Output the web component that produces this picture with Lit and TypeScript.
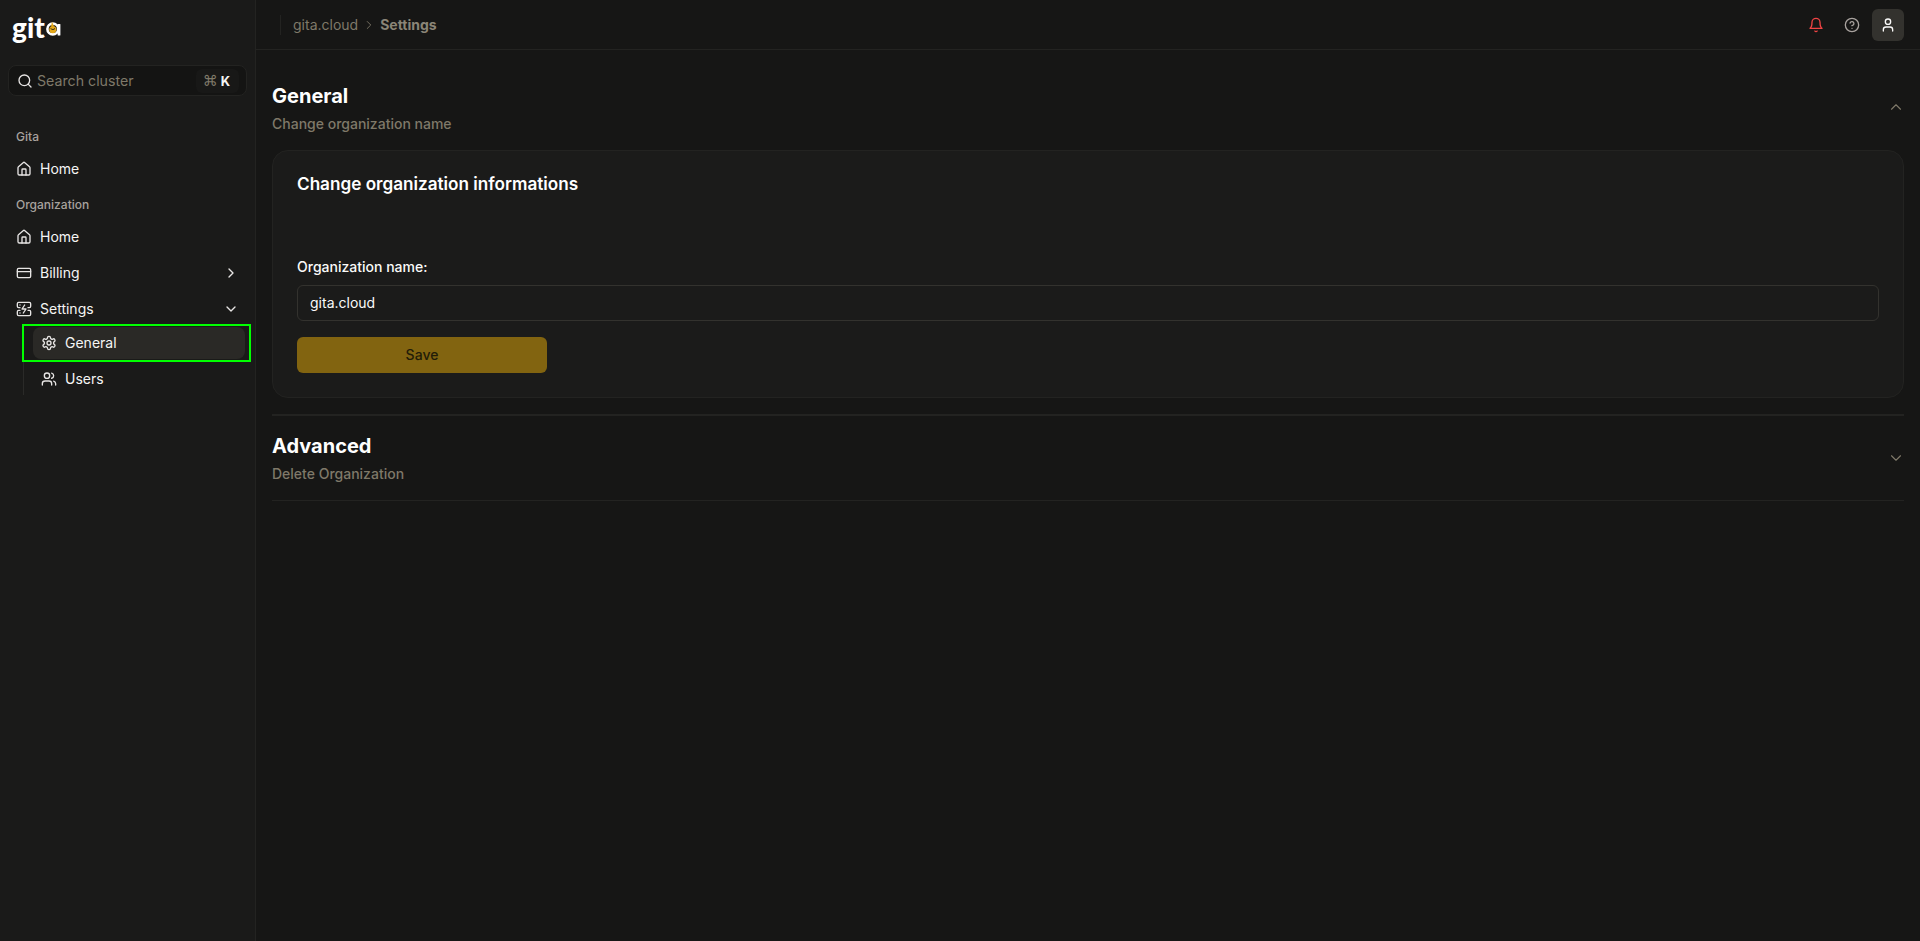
import { LitElement, html, css, svg } from "lit";
import { customElement } from "lit/decorators.js";

const icon = (body: unknown, size = 16, cls = "") => html`<svg class=${cls} width=${size} height=${size} viewBox="0 0 24 24" fill="none" stroke="currentColor" stroke-width="2" stroke-linecap="round" stroke-linejoin="round">${body}</svg>`;

const I = {
  search: svg`<circle cx="11" cy="11" r="8"/><path d="m21 21-4.3-4.3"/>`,
  house: svg`<path d="M15 21v-8a1 1 0 0 0-1-1h-4a1 1 0 0 0-1 1v8"/><path d="M3 10a2 2 0 0 1 .709-1.528l7-5.999a2 2 0 0 1 2.582 0l7 5.999A2 2 0 0 1 21 10v9a2 2 0 0 1-2 2H5a2 2 0 0 1-2-2z"/>`,
  card: svg`<rect width="20" height="14" x="2" y="5" rx="2"/><line x1="2" x2="22" y1="10" y2="10"/>`,
  server: svg`<path d="M6 10H4a2 2 0 0 1-2-2V4a2 2 0 0 1 2-2h16a2 2 0 0 1 2 2v4a2 2 0 0 1-2 2h-2"/><path d="M6 14H4a2 2 0 0 0-2 2v4a2 2 0 0 0 2 2h16a2 2 0 0 0 2-2v-4a2 2 0 0 0-2-2h-2"/><path d="M6 6h.01"/><path d="M6 18h.01"/><path d="m13 6-4 6h6l-4 6"/>`,
  gear: svg`<path d="M12.22 2h-.44a2 2 0 0 0-2 2v.18a2 2 0 0 1-1 1.73l-.43.25a2 2 0 0 1-2 0l-.15-.08a2 2 0 0 0-2.73.73l-.22.38a2 2 0 0 0 .73 2.73l.15.1a2 2 0 0 1 1 1.72v.51a2 2 0 0 1-1 1.74l-.15.09a2 2 0 0 0-.73 2.73l.22.38a2 2 0 0 0 2.73.73l.15-.08a2 2 0 0 1 2 0l.43.25a2 2 0 0 1 1 1.73V20a2 2 0 0 0 2 2h.44a2 2 0 0 0 2-2v-.18a2 2 0 0 1 1-1.73l.43-.25a2 2 0 0 1 2 0l.15.08a2 2 0 0 0 2.73-.73l.22-.39a2 2 0 0 0-.73-2.73l-.15-.08a2 2 0 0 1-1-1.74v-.5a2 2 0 0 1 1-1.74l.15-.09a2 2 0 0 0 .73-2.73l-.22-.38a2 2 0 0 0-2.73-.73l-.15.08a2 2 0 0 1-2 0l-.43-.25a2 2 0 0 1-1-1.73V4a2 2 0 0 0-2-2z"/><circle cx="12" cy="12" r="3"/>`,
  users: svg`<path d="M16 21v-2a4 4 0 0 0-4-4H6a4 4 0 0 0-4 4v2"/><circle cx="9" cy="7" r="4"/><path d="M22 21v-2a4 4 0 0 0-3-3.87"/><path d="M16 3.13a4 4 0 0 1 0 7.75"/>`,
  right: svg`<path d="m9 18 6-6-6-6"/>`,
  down: svg`<path d="m6 9 6 6 6-6"/>`,
  up: svg`<path d="m18 15-6-6-6 6"/>`,
  bell: svg`<path d="M6 8a6 6 0 0 1 12 0c0 7 3 9 3 9H3s3-2 3-9"/><path d="M10.3 21a1.94 1.94 0 0 0 3.4 0"/>`,
  help: svg`<circle cx="12" cy="12" r="10"/><path d="M9.09 9a3 3 0 0 1 5.83 1c0 2-3 3-3 3"/><path d="M12 17h.01"/>`,
  user: svg`<path d="M19 21v-2a4 4 0 0 0-4-4H9a4 4 0 0 0-4 4v2"/><circle cx="12" cy="7" r="4"/>`,
};

@customElement("app-root")
export class AppRoot extends LitElement {
  static styles = css`
    :host {
      display: flex;
      min-height: 941px;
      background: #161615;
      color: #fafaf9;
      font-family: Inter, "Liberation Sans", sans-serif;
      font-size: 14px;
      line-height: 20px;
    }
    * { box-sizing: border-box; }
    svg { flex: none; display: block; }

    .side {
      width: 256px;
      flex: none;
      background: #1a1a19;
      border-right: 1px solid #232321;
      padding: 17px 8px 0;
      display: flex;
      flex-direction: column;
    }
    .logo {
      display: flex;
      align-items: flex-end;
      height: 20px;
      margin-left: 4px;
      color: #fff;
    }
    .logo b {
      font-family: Lato, sans-serif;
      font-weight: 900;
      font-size: 28px;
      line-height: 20px;
    }
    .logo svg { margin: 0 0 1px 1px; }

    .search {
      margin-top: 28px;
      height: 31px;
      border: 1px solid #232321;
      border-radius: 8px;
      background: #141413;
      display: flex;
      align-items: center;
      padding: 0 7px 0 8px;
      color: #7f7969;
      font-size: 14.2px;
      gap: 4px;
    }
    .search > svg { color: #e7e5e4; }
    .search span.ph { flex: 1; }
    .kbd {
      width: 43px;
      height: 24px;
      border-radius: 6px;
      background: #181817;
      display: flex;
      align-items: center;
      justify-content: center;
      gap: 3px;
      padding-right: 2px;
      font-size: 13px;
      font-weight: 700;
      color: #f5f5f4;
    }
    .kbd i { font-style: normal; font-weight: 400; font-size: 15px; color: #7f7969; font-family: "DejaVu Sans", sans-serif; }

    .label {
      font-size: 12px;
      line-height: 16px;
      font-weight: 500;
      color: #a8a29e;
      padding-left: 8px;
      height: 16px;
    }
    .label.first { margin-top: 33px; }
    .label.next { margin-top: 12px; }

    .nav { display: flex; flex-direction: column; gap: 4px; margin-top: 8px; }
    .row {
      height: 32px;
      display: flex;
      align-items: center;
      gap: 8px;
      padding: 0 8px 0 8px;
      border-radius: 8px;
      color: #f5f5f4;
    }
    .row > svg:first-child { color: #e7e5e4; }
    .row .t { flex: 1; }
    .row .chev { color: #e7e5e4; }

    .sub {
      margin: -1px 0 0 15px;
      padding-left: 9px;
      border-left: 1px solid #2a2a28;
      display: flex;
      flex-direction: column;
      gap: 4px;
      width: 223px;
    }
    .sub .row { padding-left: 8px; width: 212px; height: 32px; }
    .sub .active { background: #2a2926; position: relative; margin-top: 3px; }
    .mark {
      position: absolute;
      left: -11px;
      right: -6px;
      top: -3px;
      bottom: -3px;
      border: 2px solid #00ff00;
      pointer-events: none;
    }

    .main { flex: 1; min-width: 0; display: flex; flex-direction: column; }
    .top {
      height: 50px;
      border-bottom: 1px solid #232321;
      display: flex;
      align-items: center;
      padding: 0 16px 0 24px;
    }
    .sep { width: 1px; height: 20px; background: #232321; margin-right: 12px; }
    .crumbs { display: flex; align-items: center; gap: 4px; color: #7f7969; flex: 1; }
    .crumbs svg { stroke-width: 1.5; }
    .crumbs b { font-weight: 700; color: #8a8577; }
    .actions { display: flex; align-items: center; gap: 4px; }
    .btn {
      width: 32px;
      height: 32px;
      border-radius: 6px;
      display: flex;
      align-items: center;
      justify-content: center;
      color: #a8a29e;
    }
    .btn.bell { color: #ef4444; }
    .btn.user { background: #33322e; color: #fafaf9; }

    .content { padding: 32px 16px 0 16px; display: flex; flex-direction: column; }
    .head {
      display: flex;
      align-items: center;
      justify-content: space-between;
    }
    .head h2 {
      margin: 0;
      font-size: 20px;
      line-height: 28px;
      font-weight: 700;
      color: #fff;
    }
    .head p { margin: 4px 0 0; color: #7f7969; line-height: 20px; font-weight: 500; }
    .head svg { color: #7f7969; stroke-width: 1.5; margin-right: -1px; }
    .head svg.lift { margin-bottom: 2px; }

    .card {
      margin-top: 16px;
      height: 248px;
      border: 1px solid #232321;
      border-radius: 16px;
      background: #1b1b1a;
      padding: 19px 24px 0;
      display: flex;
      flex-direction: column;
    }
    .card h3 { margin: 0; font-size: 17.15px; line-height: 28px; font-weight: 600; color: #fff; }
    .card label { margin-top: 59px; font-weight: 500; line-height: 20px; color: #fafaf9; }
    .input {
      margin-top: 8px;
      height: 36px;
      border: 1px solid #33322e;
      border-radius: 6px;
      padding: 0 12px 0 12px;
      display: flex;
      align-items: center;
      color: #fafaf9;
    }
    .save {
      margin-top: 16px;
      width: 250px;
      height: 36px;
      border-radius: 6px;
      background: #826410;
      color: #221c08;
      font-weight: 500;
      display: flex;
      align-items: center;
      justify-content: center;
    }
    .rule { height: 2px; background: #232321; margin-top: 16px; }
    .adv { padding-top: 16px; padding-bottom: 16px; border-bottom: 1px solid #232321; }
  `;

  render() {
    return html`
      <aside class="side">
        <div class="logo">
          <b>git</b>
          <svg width="15" height="15" viewBox="0 0 15 15" aria-hidden="true">
            <circle cx="6.8" cy="8" r="5.4" fill="#1a1a19" stroke="#fff" stroke-width="2.6"/>
            <rect x="11.6" y="3" width="2.8" height="11.4" rx="0.5" fill="#fff"/>
            <circle cx="6.8" cy="8.6" r="3.6" fill="#e5a91a"/>
            <path d="M4.6 7.4c1.6 1.6 3.2 1.4 4.4 0" stroke="#1a1a19" stroke-width="0.9" fill="none"/>
            <path d="M6 0.8l2 4.4-3 .2z" fill="#e5a91a"/>
          </svg>
        </div>

        <div class="search">
          ${icon(I.search, 16)}
          <span class="ph">Search cluster</span>
          <span class="kbd"><i>⌘</i>K</span>
        </div>

        <div class="label first">Gita</div>
        <div class="nav">
          <div class="row">${icon(I.house)}<span class="t">Home</span></div>
        </div>

        <div class="label next">Organization</div>
        <div class="nav">
          <div class="row">${icon(I.house)}<span class="t">Home</span></div>
          <div class="row">${icon(I.card)}<span class="t">Billing</span>${icon(I.right, 16, "chev")}</div>
          <div class="row">${icon(I.server)}<span class="t">Settings</span>${icon(I.down, 16, "chev")}</div>
        </div>
        <div class="sub">
          <div class="row active">${icon(I.gear)}<span class="t">General</span><span class="mark"></span></div>
          <div class="row">${icon(I.users)}<span class="t">Users</span></div>
        </div>
      </aside>

      <div class="main">
        <header class="top">
          <span class="sep"></span>
          <div class="crumbs">
            <span>gita.cloud</span>
            ${icon(I.right, 14)}
            <b>Settings</b>
          </div>
          <div class="actions">
            <span class="btn bell">${icon(I.bell)}</span>
            <span class="btn">${icon(I.help)}</span>
            <span class="btn user">${icon(I.user)}</span>
          </div>
        </header>

        <section class="content">
          <div class="head">
            <div>
              <h2>General</h2>
              <p>Change organization name</p>
            </div>
            ${icon(I.up, 18, "lift")}
          </div>
          <div class="card">
            <h3>Change organization informations</h3>
            <label>Organization name:</label>
            <div class="input">gita.cloud</div>
            <div class="save">Save</div>
          </div>
          <div class="rule"></div>
          <div class="head adv">
            <div>
              <h2>Advanced</h2>
              <p>Delete Organization</p>
            </div>
            ${icon(I.down, 18)}
          </div>
        </section>
      </div>
    `;
  }
}
